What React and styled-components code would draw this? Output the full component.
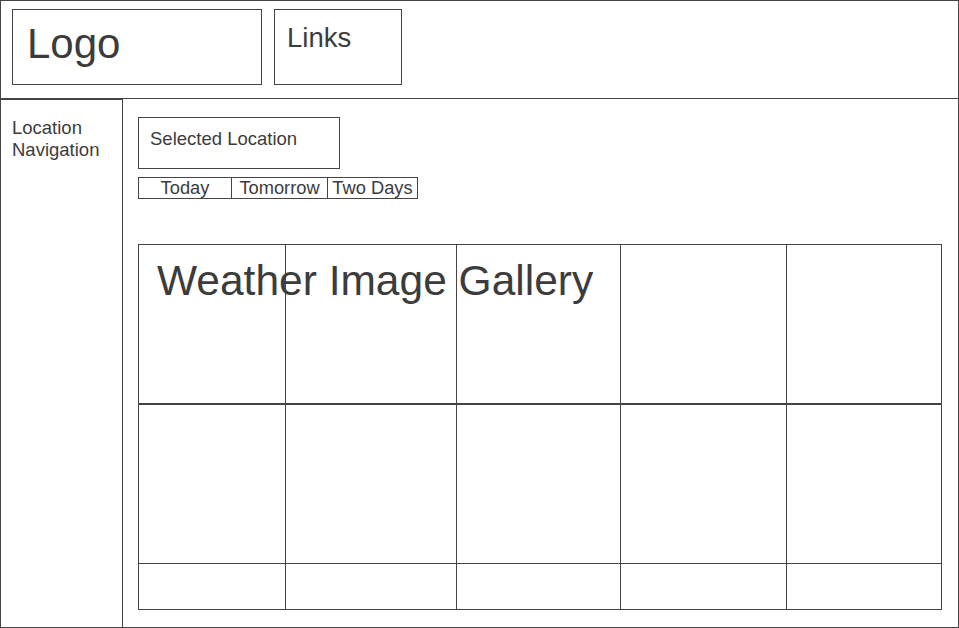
import React from 'react';
import styled, { createGlobalStyle } from 'styled-components';

const GlobalStyle = createGlobalStyle`
  * {
    box-sizing: border-box;
  }
  body {
    margin: 0;
    background: #fff;
    color: #3c3c3c;
    font-family: 'Liberation Sans', Arial, sans-serif;
  }
`;

const line = '#444';

const Page = styled.div`
  width: 959px;
  height: 628px;
  border: 1px solid ${line};
  display: flex;
  flex-direction: column;
`;

const Header = styled.header`
  height: 98px;
  flex-shrink: 0;
  border-bottom: 1px solid ${line};
  display: flex;
  align-items: flex-start;
  gap: 12px;
  padding: 8px 0 0 11px;
`;

const HeaderBox = styled.div`
  width: ${({ $w }) => $w}px;
  height: 76px;
  border: 1px solid ${line};
  font-size: ${({ $size }) => $size}px;
  line-height: ${({ $lh }) => $lh}px;
  padding: ${({ $pt }) => $pt}px 0 0 ${({ $pl }) => $pl}px;
`;

const Body = styled.div`
  flex: 1;
  display: flex;
  min-height: 0;
`;

const Nav = styled.nav`
  width: 122px;
  flex-shrink: 0;
  border-top: 1px solid ${line};
  border-right: 1px solid ${line};
  padding: 17px 0 0 11px;
  font-size: 18.5px;
  line-height: 22px;
`;

const Main = styled.main`
  flex: 1;
  padding: 18px 16px 0 15px;
`;

const Selected = styled.div`
  width: 202px;
  height: 52px;
  border: 1px solid ${line};
  padding: 11px 0 0 11px;
  font-size: 18.5px;
  line-height: 20px;
`;

const Tabs = styled.div`
  display: inline-flex;
  margin-top: 8px;
  border: 1px solid ${line};
  border-right: none;
`;

const Tab = styled.div`
  width: ${({ $w }) => $w}px;
  height: 20px;
  border-right: 1px solid ${line};
  text-align: center;
  font-size: 18.3px;
  line-height: 20px;
  white-space: nowrap;
`;

const Gallery = styled.section`
  position: relative;
  width: 804px;
  margin-top: 45px;
  display: grid;
  grid-template-columns: 147px 171px 164px 166px 155px;
  grid-template-rows: 160px 159px 46px;
  border-top: 1px solid ${line};
  border-left: 1px solid ${line};
`;

const Cell = styled.div`
  border-right: 1px solid ${line};
  border-bottom: ${({ $thick }) => ($thick ? 2 : 1)}px solid ${line};
`;

const GalleryTitle = styled.h1`
  position: absolute;
  top: 12px;
  left: 18px;
  margin: 0;
  font-size: 42.5px;
  font-weight: 400;
  line-height: 48px;
  white-space: nowrap;
`;

const tabs = [
  { label: 'Today', w: 93 },
  { label: 'Tomorrow', w: 96 },
  { label: 'Two Days', w: 90 },
];

const App = () => (
  <>
    <GlobalStyle />
    <Page>
      <Header>
        <HeaderBox $w={250} $size={42} $lh={48} $pt={10} $pl={14}>
          Logo
        </HeaderBox>
        <HeaderBox $w={128} $size={27.5} $lh={32} $pt={12} $pl={12}>
          Links
        </HeaderBox>
      </Header>
      <Body>
        <Nav>
          Location
          <br />
          Navigation
        </Nav>
        <Main>
          <Selected>Selected Location</Selected>
          <Tabs>
            {tabs.map((t) => (
              <Tab key={t.label} $w={t.w}>
                {t.label}
              </Tab>
            ))}
          </Tabs>
          <Gallery>
            {Array.from({ length: 15 }).map((_, i) => (
              <Cell key={i} $thick={i < 5} />
            ))}
            <GalleryTitle>Weather Image Gallery</GalleryTitle>
          </Gallery>
        </Main>
      </Body>
    </Page>
  </>
);

export default App;
